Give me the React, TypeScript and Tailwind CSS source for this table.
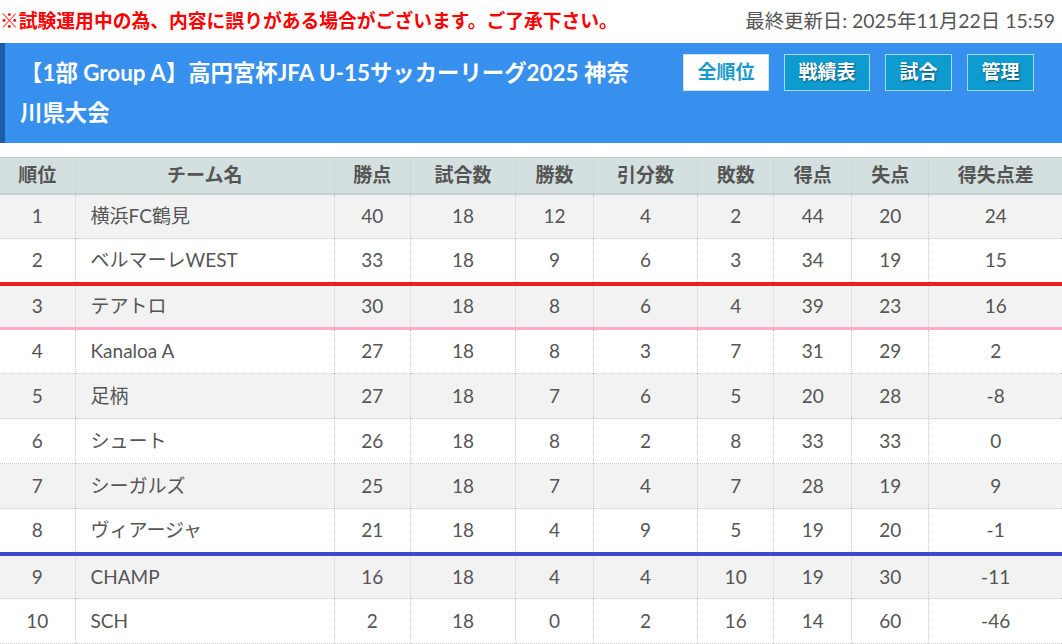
import React from 'react';

interface Row {
  rank: number;
  team: string;
  pts: number;
  played: number;
  win: number;
  draw: number;
  lose: number;
  gf: number;
  ga: number;
  gd: number;
}

const rows: Row[] = [
  { rank: 1, team: '横浜FC鶴見', pts: 40, played: 18, win: 12, draw: 4, lose: 2, gf: 44, ga: 20, gd: 24 },
  { rank: 2, team: 'ベルマーレWEST', pts: 33, played: 18, win: 9, draw: 6, lose: 3, gf: 34, ga: 19, gd: 15 },
  { rank: 3, team: 'テアトロ', pts: 30, played: 18, win: 8, draw: 6, lose: 4, gf: 39, ga: 23, gd: 16 },
  { rank: 4, team: 'Kanaloa A', pts: 27, played: 18, win: 8, draw: 3, lose: 7, gf: 31, ga: 29, gd: 2 },
  { rank: 5, team: '足柄', pts: 27, played: 18, win: 7, draw: 6, lose: 5, gf: 20, ga: 28, gd: -8 },
  { rank: 6, team: 'シュート', pts: 26, played: 18, win: 8, draw: 2, lose: 8, gf: 33, ga: 33, gd: 0 },
  { rank: 7, team: 'シーガルズ', pts: 25, played: 18, win: 7, draw: 4, lose: 7, gf: 28, ga: 19, gd: 9 },
  { rank: 8, team: 'ヴィアージャ', pts: 21, played: 18, win: 4, draw: 9, lose: 5, gf: 19, ga: 20, gd: -1 },
  { rank: 9, team: 'CHAMP', pts: 16, played: 18, win: 4, draw: 4, lose: 10, gf: 19, ga: 30, gd: -11 },
  { rank: 10, team: 'SCH', pts: 2, played: 18, win: 0, draw: 2, lose: 16, gf: 14, ga: 60, gd: -46 },
];

const headers = ['順位', 'チーム名', '勝点', '試合数', '勝数', '引分数', '敗数', '得点', '失点', '得失点差'];
const widths = ['w-[75px]', 'w-[259px]', 'w-[76px]', 'w-[105px]', 'w-[78px]', 'w-[104px]', 'w-[76px]', 'w-[78px]', 'w-[77px]', 'w-[133px]'];

// promotion / playoff / relegation lines under these ranks
const lineUnder: Record<number, string> = {
  2: 'border-b-[4px] border-b-[#ee1c25] border-solid',
  3: 'border-b-[3px] border-b-[#ffaacb] border-solid',
  8: 'border-b-[4px] border-b-[#3f48cc] border-solid',
};

const navBtn =
  'h-[37px] bg-[#0e9bcf] border border-[#a9d9ef] text-white text-[19px] font-bold [text-shadow:1px_1px_2px_rgba(0,0,0,0.45)]';

export default function App() {
  return (
    <div className="w-[1062px] h-[644px] overflow-hidden bg-white font-['Lato','Noto_Sans_CJK_JP',sans-serif] text-[#555]">
      {/* notice bar */}
      <div className="flex items-center justify-between h-[43px] pb-[1px]">
        <div className="text-[18.8px] font-bold text-[#ff0000] whitespace-nowrap">
          ※試験運用中の為、内容に誤りがある場合がございます。ご了承下さい。
        </div>
        <div className="text-[19.4px] text-[#555] pr-[7px] whitespace-nowrap">最終更新日: 2025年11月22日 15:59</div>
      </div>

      {/* title header */}
      <div className="flex h-[100px] bg-[#3790ed] border-l-[5px] border-[#1b5fa6]">
        <h1 className="w-[638px] pl-[15px] py-[10px] text-[22.4px] leading-[40px] font-bold text-white">
          【1部 Group A】高円宮杯JFA U-15サッカーリーグ2025 神奈川県大会
        </h1>
        <div className="flex-1 flex items-start justify-end gap-[15px] pt-[11px] pr-[28px]">
          <button className="h-[37px] w-[86px] bg-white border border-[#cfe3f2] text-[#1a99cc] text-[19px] font-bold">
            全順位
          </button>
          <button className={`${navBtn} w-[86px]`}>戦績表</button>
          <button className={`${navBtn} w-[67px]`}>試合</button>
          <button className={`${navBtn} w-[67px]`}>管理</button>
        </div>
      </div>

      {/* standings table */}
      <table className="mt-[14px] w-[1062px] border-collapse table-fixed text-[19px]">
        <thead>
          <tr className="h-[36px] bg-[#d4dfdf] border-t border-b-2 border-[#c8cfcf]">
            {headers.map((h, i) => (
              <th
                key={h}
                className={`${widths[i]} font-bold text-[#555] text-center border-l border-dotted border-l-[#c4c9c9] first:border-l-0`}
              >
                {h}
              </th>
            ))}
          </tr>
        </thead>
        <tbody>
          {rows.map((r) => (
            <tr
              key={r.rank}
              className={`h-[45px] ${r.rank % 2 === 1 ? 'bg-[#f2f2f2]' : 'bg-white'} ${
                lineUnder[r.rank] ?? 'border-b border-dotted border-b-[#cccccc]'
              }`}
            >
              <td className="text-center">{r.rank}</td>
              <td className="text-left pl-[15px] border-l border-dotted border-l-[#cccccc] whitespace-nowrap">{r.team}</td>
              {[r.pts, r.played, r.win, r.draw, r.lose, r.gf, r.ga, r.gd].map((v, i) => (
                <td key={i} className="text-center border-l border-dotted border-l-[#cccccc]">
                  {v}
                </td>
              ))}
            </tr>
          ))}
        </tbody>
      </table>
    </div>
  );
}
